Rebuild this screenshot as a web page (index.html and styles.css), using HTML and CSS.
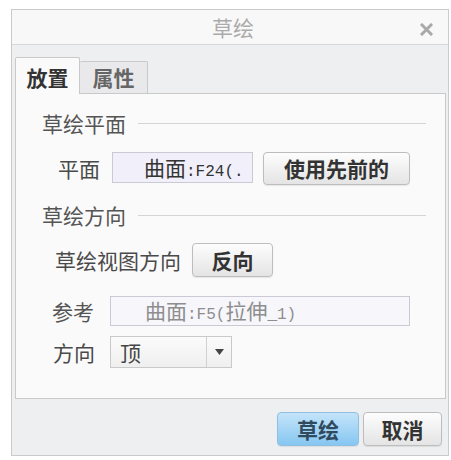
FILE: index.html
```html
<!DOCTYPE html>
<html lang="zh-CN">
<head>
<meta charset="utf-8">
<title>草绘</title>
<link rel="stylesheet" href="styles.css">
</head>
<body>
<div class="dialog">
  <div class="titlebar">
    <span class="title">草绘</span>
    <span class="close">
      <svg width="13" height="13" viewBox="0 0 13 13"><path d="M2 2 L11 11 M11 2 L2 11" stroke="#a9a9a9" stroke-width="3" stroke-linecap="square"/></svg>
    </span>
  </div>
  <div class="body">
    <div class="tabs">
      <div class="tab active">放置</div>
      <div class="tab">属性</div>
    </div>
    <div class="panel">
      <div class="group-head">草绘平面<span class="rule"></span></div>
      <div class="row row-plane">
        <span class="label">平面</span>
        <span class="field field-plane">曲面<span class="mono">:F24(.</span></span>
        <button class="btn btn-prev">使用先前的</button>
      </div>
      <div class="group-head head-2">草绘方向<span class="rule"></span></div>
      <div class="row row-view">
        <span class="label">草绘视图方向</span>
        <button class="btn btn-flip">反向</button>
      </div>
      <div class="row row-ref">
        <span class="label">参考</span>
        <span class="field field-ref">曲面<span class="mono">:F5(</span>拉伸<span class="mono">_1)</span></span>
      </div>
      <div class="row row-dir">
        <span class="label">方向</span>
        <span class="select"><span class="sel-text">顶</span><span class="sel-arrow"><svg width="9" height="6" viewBox="0 0 9 6"><path d="M0 0 H9 L4.5 6 Z" fill="#444"/></svg></span></span>
      </div>
    </div>
    <div class="footer">
      <button class="btn btn-ok">草绘</button>
      <button class="btn btn-cancel">取消</button>
    </div>
  </div>
</div>
</body>
</html>
```
FILE: styles.css
```css
* { box-sizing: border-box; }
body {
  margin: 0;
  background: #ffffff;
  font-family: "Noto Sans CJK SC", "Noto Sans", sans-serif;
}
.dialog {
  margin: 9px 0 0 11px;
  width: 438px;
  height: 447px;
  border: 1px solid #cacaca;
  display: flex;
  flex-direction: column;
  background: #eeeff1;
}
.titlebar {
  height: 35px;
  border-bottom: 1px solid #d8d8d8;
  background: #f8f8f8;
  display: flex;
  align-items: center;
  justify-content: center;
  position: relative;
}
.title {
  font-size: 21px;
  line-height: 24px;
  color: #ababab;
  margin-left: 6px;
}
.close {
  position: absolute;
  right: 15px;
  top: 13px;
  width: 13px;
  height: 13px;
  display: flex;
}
.body {
  flex: 1;
  display: flex;
  flex-direction: column;
  padding: 12px 2px 0 3px;
}
.tabs {
  display: flex;
  align-items: flex-end;
  height: 36px;
}
.tab {
  font-size: 21px;
  font-weight: bold;
  line-height: 30px;
  border: 1px solid #c9c9c9;
  border-bottom: none;
  border-radius: 2px 2px 0 0;
  text-align: center;
}
.tab.active {
  width: 65px;
  height: 37px;
  padding-top: 4px;
  background: #fafafa;
  color: #333;
  position: relative;
  z-index: 1;
  margin-bottom: -1px;
}
.tab:not(.active) {
  width: 68px;
  height: 32px;
  background: #e9e9eb;
  color: #666;
  border-left: none;
}
.panel {
  height: 306px;
  border: 1px solid #c9c9c9;
  background: #fafafa;
  display: flex;
  flex-direction: column;
  padding-right: 19px;
}
.group-head {
  display: flex;
  align-items: center;
  font-size: 21px;
  line-height: 22px;
  height: 22px;
  color: #555;
  padding-left: 26px;
  margin-top: 18px;
}
.group-head.head-2 { margin-top: 19px; }
.rule {
  flex: 1;
  height: 1px;
  background: #d4d4d4;
  margin-left: 12px;
}
.row {
  display: flex;
  align-items: center;
}
.label {
  font-size: 21px;
  line-height: 24px;
  color: #4a4a4a;
}
.mono {
  font-family: "Liberation Mono", "DejaVu Sans Mono", monospace;
  font-size: 16px;
}
.field {
  display: block;
  font-size: 21px;
  border: 1px solid #cbc9d3;
  white-space: nowrap;
  overflow: hidden;
}
.row-plane { margin-top: 17px; height: 34px; }
.row-plane .label { margin-left: 42px; }
.field-plane {
  margin-left: 12px;
  width: 141px;
  height: 31px;
  line-height: 28px;
  background: #f1eff9;
  color: #333;
  padding-left: 31px;
  margin-bottom: 2px;
}
.btn {
  font-family: "Noto Sans CJK SC", sans-serif;
  font-size: 21px;
  font-weight: bold;
  line-height: 24px;
  color: #333;
  border: 1px solid #bdbdbd;
  border-radius: 4px;
  background: linear-gradient(#fdfdfd, #e4e4e4);
  padding: 0;
  box-shadow: 0 1px 1px rgba(0,0,0,0.08);
}
.btn-prev {
  margin-left: 10px;
  width: 147px;
  height: 33px;
}
.row-view { margin-top: 17px; height: 34px; }
.row-view .label { margin-left: 39px; }
.btn-flip {
  margin-left: 11px;
  width: 81px;
  height: 34px;
}
.row-ref { margin-top: 19px; height: 30px; }
.row-ref .label { margin-left: 36px; color: #555; }
.field-ref {
  margin-left: 16px;
  width: 300px;
  height: 30px;
  line-height: 27px;
  background: #f7f6fb;
  color: #8e8e8e;
  padding-left: 34px;
}
.row-dir { margin-top: 10px; height: 32px; }
.row-dir .label { margin-left: 37px; }
.select {
  margin-left: 15px;
  width: 122px;
  height: 32px;
  border: 1px solid #c9c9c9;
  background: linear-gradient(#fbfbfb, #efefef);
  display: flex;
  align-items: stretch;
}
.sel-text {
  flex: 1;
  font-size: 21px;
  line-height: 30px;
  color: #444;
  padding-left: 9px;
}
.sel-arrow {
  width: 25px;
  border-left: 1px solid #d0d0d0;
  display: flex;
  align-items: center;
  justify-content: center;
}
.footer {
  flex: 1;
  display: flex;
  justify-content: flex-end;
  align-items: flex-start;
  padding: 13px 4px 0 0;
  gap: 4px;
}
.btn-ok {
  width: 82px;
  height: 34px;
  border-color: #8fc0e2;
  background: linear-gradient(#c4e4fa, #86c6f1);
  color: #2f4a5e;
}
.btn-cancel {
  width: 79px;
  height: 34px;
}
```
